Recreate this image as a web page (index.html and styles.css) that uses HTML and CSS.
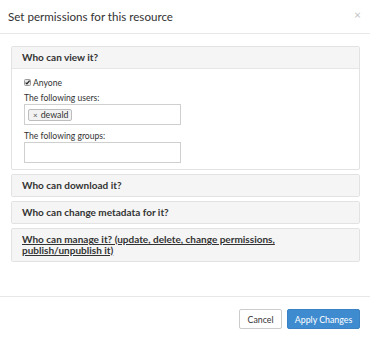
FILE: index.html
```html
<!DOCTYPE html>
<html>
<head>
<meta charset="utf-8">
<link rel="stylesheet" href="styles.css">
</head>
<body>
<div class="modal">
  <div class="modal-header">
    <h4 class="modal-title">Set permissions for this resource</h4>
    <span class="close">&times;</span>
  </div>
  <div class="modal-body">
    <div class="panel-group">
      <div class="panel">
        <div class="panel-heading">Who can view it?</div>
        <div class="panel-body">
          <label class="check-row">
            <svg class="checkbox" width="7" height="7" viewBox="0 0 7 7"><rect x="0.5" y="0.5" width="6" height="6" rx="1" fill="#e8e8e8" stroke="#999"/><path d="M1.6 3.6 L2.9 4.9 L5.6 1.6" fill="none" stroke="#222" stroke-width="1.3"/></svg>
            <span>Anyone</span>
          </label>
          <div class="field-label">The following users:</div>
          <div class="tag-input">
            <span class="tag"><span class="tag-x">&times;</span>dewald</span>
          </div>
          <div class="field-label">The following groups:</div>
          <div class="tag-input"></div>
        </div>
      </div>
      <div class="panel">
        <div class="panel-heading">Who can download it?</div>
      </div>
      <div class="panel">
        <div class="panel-heading">Who can change metadata for it?</div>
      </div>
      <div class="panel">
        <div class="panel-heading underline">Who can manage it? (update, delete, change permissions, publish/unpublish it)</div>
      </div>
    </div>
  </div>
  <div class="modal-footer">
    <button class="btn btn-default">Cancel</button>
    <button class="btn btn-primary">Apply Changes</button>
  </div>
</div>
</body>
</html>
```
FILE: styles.css
```css
* { box-sizing: border-box; }
html, body { margin: 0; padding: 0; background: #fff; }
body {
  font-family: Lato, "Open Sans", sans-serif;
  color: #333;
  width: 370px;
  height: 339px;
  overflow: hidden;
}
.modal { display: flex; flex-direction: column; height: 339px; }
.modal-header {
  height: 34px;
  padding: 0 9px 0 8px;
  border-bottom: 1px solid #e8e8e8;
  display: flex;
  align-items: center;
  justify-content: space-between;
}
.modal-title {
  margin: 0;
  font-size: 11.6px;
  font-weight: 400;
  color: #333;
  line-height: 14px;
}
.close {
  color: #c4c4c4;
  font-size: 12px;
  line-height: 12px;
  margin-top: -3px;
}
.modal-body {
  padding: 12px 10px 0 11px;
  flex: 1;
}
.panel-group { display: flex; flex-direction: column; gap: 4px; }
.panel {
  border: 1px solid #e2e2e2;
  border-radius: 2px;
  background: #fff;
}
.panel-heading {
  background: #f5f5f5;
  padding: 5px 10px;
  font-size: 10px;
  line-height: 11px;
  font-weight: 700;
  color: #333;
}
.panel-heading.underline { text-decoration: underline; }
.panel-body {
  border-top: 1px solid #e6e6e6;
  padding: 8px 12px 6px 12px;
  font-size: 8.6px;
  line-height: 10px;
}
.check-row {
  display: flex;
  align-items: center;
  gap: 2px;
  height: 11px;
  margin-bottom: 5px;
}
.checkbox { display: block; }
.field-label { height: 11px; line-height: 11px; }
.tag-input {
  width: 157px;
  height: 21px;
  border: 1px solid #cfcfcf;
  padding: 2px 3px;
  margin-bottom: 6px;
  display: flex;
  align-items: center;
}
.tag-input:last-child { margin-bottom: 0; }
.tag {
  display: inline-flex;
  align-items: center;
  height: 12px;
  padding: 0 3px 0 4px;
  border: 1px solid #bdbdbd;
  border-radius: 2px;
  background: #f2f2f2;
  font-size: 8.8px;
  color: #333;
}
.tag-x { font-size: 8px; margin-right: 3px; color: #555; }
.modal-footer {
  border-top: 1px solid #e8e8e8;
  padding: 12px 10px 10px;
  display: flex;
  justify-content: flex-end;
  gap: 5px;
}
.btn {
  font-family: Lato, "Open Sans", sans-serif;
  font-size: 8.8px;
  height: 20px;
  padding: 0 6px;
  border-radius: 2px;
  border: 1px solid #ccc;
  background: #fff;
  color: #333;
}
.btn-default { width: 43px; }
.btn-primary {
  width: 73px;
  background: #3e8bd0;
  border-color: #3a82c4;
  color: #fff;
}
```
